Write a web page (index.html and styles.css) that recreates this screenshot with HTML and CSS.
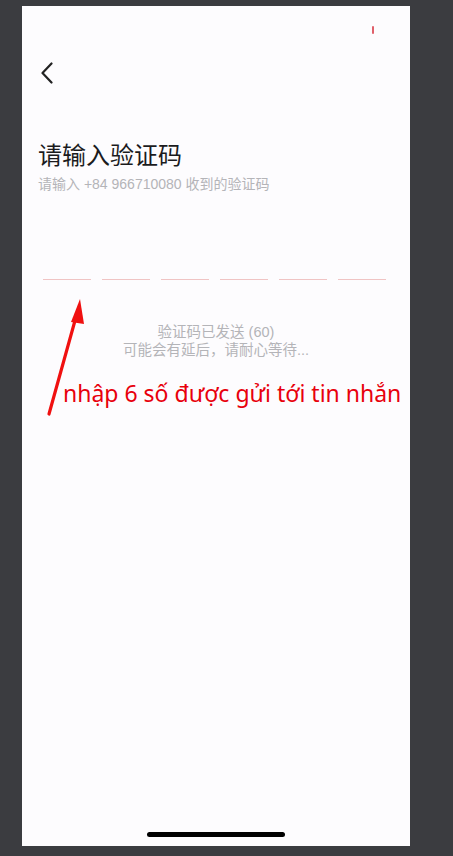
FILE: index.html
```html
<!DOCTYPE html>
<html lang="zh">
<head>
<meta charset="utf-8">
<link rel="stylesheet" href="styles.css">
</head>
<body>
<div class="phone">
  <div class="status"><span class="rec"></span></div>
  <div class="nav">
    <svg class="back" width="14" height="22" viewBox="0 0 14 22"><path d="M11.5 1.5 L2.5 11 L11.5 20.5" fill="none" stroke="#222" stroke-width="2.2" stroke-linecap="round" stroke-linejoin="round"/></svg>
  </div>
  <h1 class="title">请输入验证码</h1>
  <p class="sub">请输入 +84 966710080 收到的验证码</p>
  <div class="code">
    <span class="slot"></span><span class="slot"></span><span class="slot"></span><span class="slot"></span><span class="slot"></span><span class="slot"></span>
  </div>
  <div class="hint">
    <p>验证码已发送 (60)</p>
    <p>可能会有延后，请耐心等待...</p>
  </div>
  <div class="spacer"></div>
  <div class="home"><span class="bar"></span></div>

  <svg class="arrow" width="60" height="130" viewBox="0 0 60 130"><line x1="7" y1="117" x2="34" y2="20" stroke="#f01010" stroke-width="3.2" stroke-linecap="round"/><polygon points="38,2 29,25 42,27" fill="#f01010"/></svg>
  <div class="note">nhập 6 số được gửi tới tin nhắn</div>
</div>
</body>
</html>
```

FILE: styles.css
```css
html, body {
  margin: 0;
  padding: 0;
}
body {
  background: #3b3c40;
  width: 453px;
  height: 856px;
  overflow: hidden;
  font-family: "Liberation Sans", "Noto Sans CJK SC", sans-serif;
}
.phone {
  position: relative;
  margin: 6px 0 0 22px;
  width: 388px;
  height: 840px;
  background: #fdfcfe;
  display: flex;
  flex-direction: column;
}
.status {
  height: 50px;
  display: flex;
  justify-content: flex-end;
  align-items: flex-start;
  padding-right: 36px;
}
.rec {
  margin-top: 20px;
  width: 2px;
  height: 8px;
  background: #e0606a;
  border-radius: 1px;
}
.nav {
  height: 30px;
  padding-left: 18px;
  display: flex;
  align-items: center;
}
.back {
  display: block;
  margin-top: 3px;
}
.title {
  margin: 52px 0 0 16px;
  font-family: "Noto Sans CJK SC", sans-serif;
  font-weight: 400;
  font-size: 24px;
  line-height: 32px;
  color: #1b1b1d;
}
.sub {
  margin: 5px 0 0 16px;
  font-size: 14px;
  line-height: 19px;
  color: #b4b4b8;
}
.code {
  margin: 85px 0 0 21px;
  display: flex;
  gap: 11px;
}
.slot {
  width: 48px;
  height: 1px;
  background: #f0c4c4;
}
.hint {
  margin-top: 43px;
  text-align: center;
  font-size: 14.5px;
  line-height: 18px;
  color: #b4b4b8;
}
.hint p {
  margin: 0;
}
.spacer {
  flex: 1;
}
.home {
  height: 14px;
  display: flex;
  justify-content: center;
}
.bar {
  width: 138px;
  height: 5px;
  border-radius: 3px;
  background: #000;
}
.arrow {
  position: absolute;
  left: 20px;
  top: 291px;
}
.note {
  position: absolute;
  left: 41px;
  top: 372px;
  font-family: "Noto Sans", sans-serif;
  font-size: 23px;
  line-height: 30px;
  color: #e8000c;
  white-space: nowrap;
}
```
